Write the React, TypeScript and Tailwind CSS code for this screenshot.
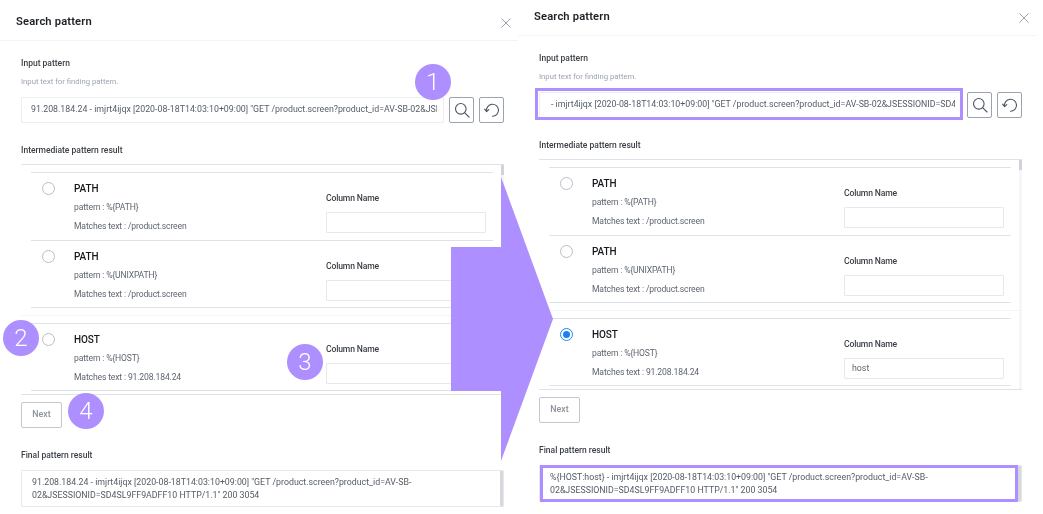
import React from "react";

const LOG1 = '91.208.184.24 - imjrt4ijqx [2020-08-18T14:03:10+09:00] "GET /product.screen?product_id=AV-SB-02&JSESSIONID=SD4SL9FF9ADFF10 HTTP/1.1" 200 3054';
const LOG2 = '- imjrt4ijqx [2020-08-18T14:03:10+09:00] "GET /product.screen?product_id=AV-SB-02&JSESSIONID=SD4SL9FF9ADFF10 HTTP/1.1" 200 3054';

function SearchGlyph() {
  return (
    <svg width="16" height="16" viewBox="0 0 16 16" fill="none" stroke="#4b5563" strokeWidth="1.1" strokeLinecap="round">
      <circle cx="6.8" cy="6.8" r="5.3" />
      <path d="M10.8 10.8L15 15" />
    </svg>
  );
}

function ResetGlyph() {
  return (
    <svg width="16" height="16" viewBox="0 0 16 16" fill="none" stroke="#4b5563" strokeWidth="1.1" strokeLinecap="round" strokeLinejoin="round">
      <path d="M2.6 9.2A6 6 0 1 1 8.5 14.2" />
      <path d="M0.6 7.2L2.6 9.6L4.8 7.6" />
    </svg>
  );
}

function Item({ name, pattern, match, value, selected, last }: { name: string; pattern: string; match: string; value?: string; selected?: boolean; last?: boolean }) {
  return (
    <div className={`flex h-[68px] border-t border-[#dfe3e8] ${last ? "border-b" : ""}`}>
      <div className="w-[43px] pt-[9px] pl-[11px]">
        {selected ? (
          <div className="flex h-[13px] w-[13px] items-center justify-center rounded-full border border-[#1e88f5]">
            <div className="h-[7px] w-[7px] rounded-full bg-[#1e7ff0]" />
          </div>
        ) : (
          <div className="h-[13px] w-[13px] rounded-full border border-[#b9bec5]" />
        )}
      </div>
      <div className="w-[252px] pt-[6px] leading-[19px] text-[#5f6670]">
        <div className="text-[10px] font-medium tracking-[-0.1px] text-[#15181c]">{name}</div>
        <div className="text-[8.6px] tracking-[-0.15px]">pattern : {pattern}</div>
        <div className="text-[8.6px] tracking-[-0.15px]">Matches text : {match}</div>
      </div>
      <div className="pt-[18px]">
        <div className="text-[8.6px] leading-[14px] font-medium tracking-[-0.15px] text-[#3a3f46]">Column Name</div>
        <div className="mt-[7px] flex h-[21px] w-[160px] items-center rounded-[1px] border border-[#e6e8eb] px-[7px] text-[8.8px] text-[#5f6670]">{value}</div>
      </div>
    </div>
  );
}

function Panel({ scrolled, filled, className }: { scrolled?: boolean; filled?: boolean; className: string }) {
  return (
    <div className={className}>
      <div className="flex h-[36px] items-center justify-between border-b border-[#f3f4f6] pl-[16px] pr-[7px]">
        <h2 className="text-[11.2px] font-semibold tracking-[0.15px] text-[#1b1f24]">Search pattern</h2>
        <svg width="10" height="10" viewBox="0 0 10 10" stroke="#9ca3af" strokeWidth="1"><path d="M0.5 0.5L9.5 9.5M9.5 0.5L0.5 9.5" /></svg>
      </div>
      <div className="pl-[21px] pr-[14px] pt-[15px]">
        <div className="text-[8.5px] leading-[14px] font-medium text-[#3a3f46]">Input pattern</div>
        <div className="mt-[5px] text-[7.7px] leading-[14px] text-[#9ca3af]">Input text for finding pattern.</div>
        <div className="mt-[8px] flex gap-[5px]">
          <div className={`relative flex h-[26px] w-[423px] items-center rounded-[1px] border border-[#eceef0] pr-[6px] ${scrolled ? "pl-[11px]" : "pl-[9px]"}`}>
            <div className="overflow-hidden whitespace-nowrap text-[8.8px] text-[#555c66]">{scrolled ? LOG2 : LOG1}</div>
            {filled && <div className="absolute -left-[5px] -right-[2px] -top-[5px] -bottom-[3px] border-[3px] border-[#ae8fff]" />}
          </div>
          <button className="flex h-[26px] w-[25px] items-center justify-center rounded-[2px] border border-[#9ca3af]"><SearchGlyph /></button>
          <button className="flex h-[26px] w-[25px] items-center justify-center rounded-[2px] border border-[#9ca3af]"><ResetGlyph /></button>
        </div>
        <div className="mt-[20px] text-[8.5px] leading-[14px] font-medium text-[#3a3f46]">Intermediate pattern result</div>
        <div className="relative mt-[7px] h-[231px] overflow-hidden border-y border-[#dfe3e8] pl-[10px] pr-[11px] pt-[7px]">
          <div className="absolute right-0 top-0 h-full w-[3px] bg-[#f5f6f7]" />
          <div className="absolute right-0 top-0 h-[10px] w-[3px] bg-[#cfd4da]" />
          <Item name="PATH" pattern="%{PATH}" match="/product.screen" />
          <Item name="PATH" pattern="%{UNIXPATH}" match="/product.screen" last />
          <div className="-mx-[10px] mt-[7px] border-t border-[#f3f4f6]" />
          <div className="mt-[7px]">
            <Item name="HOST" pattern="%{HOST}" match="91.208.184.24" value={filled ? "host" : ""} selected={filled} last />
          </div>
        </div>
        <button className="mt-[7px] block h-[26px] w-[41px] rounded-[2px] border border-[#c4c8cd] text-[8.8px] font-medium text-[#8b929b]">Next</button>
        <div className="mt-[20px] text-[8.5px] leading-[14px] font-medium text-[#3a3f46]">Final pattern result</div>
        <div className="relative mt-[8px] h-[37px] rounded-[1px] border border-[#e6e8eb] px-[10px] py-[5px] text-[8.8px] leading-[13px] whitespace-nowrap text-[#555c66]">
          {filled ? "%{HOST:host} - imjrt4ijqx" : "91.208.184.24 - imjrt4ijqx"} [2020-08-18T14:03:10+09:00] "GET /product.screen?product_id=AV-SB-
          <br />
          02&amp;JSESSIONID=SD4SL9FF9ADFF10 HTTP/1.1" 200 3054
          <div className="absolute right-0 top-0 h-full w-[3px] bg-[#d5d9de]" />
          {filled && <div className="absolute -left-0 right-[3px] -top-[1px] -bottom-[1px] border-[3px] border-[#ae8fff]" />}
        </div>
      </div>
    </div>
  );
}

function Badge({ n, className }: { n: number; className: string }) {
  return (
    <div className={`absolute flex h-[36px] w-[36px] items-center justify-center rounded-full bg-[#ae8fff] text-[24px] font-light text-white ${className}`}>{n}</div>
  );
}

export default function App() {
  return (
    <div className="relative h-[514px] w-[1043px] overflow-hidden bg-white font-['Roboto',sans-serif] blur-[0.35px]">
      <div className="flex">
        <Panel className="mt-[5px] w-[518px]" />
        <Panel className="w-[518px]" scrolled filled />
      </div>
      <svg className="absolute left-0 top-0" width="1043" height="514">
        <polygon points="451,247 501,247 501,177 553,319 501,461 501,391 451,391" fill="#ae8fff" />
      </svg>
      <Badge n={1} className="left-[415px] top-[64px]" />
      <Badge n={2} className="left-[3px] top-[320px]" />
      <Badge n={3} className="left-[287px] top-[344px]" />
      <Badge n={4} className="left-[68px] top-[393px]" />
    </div>
  );
}
